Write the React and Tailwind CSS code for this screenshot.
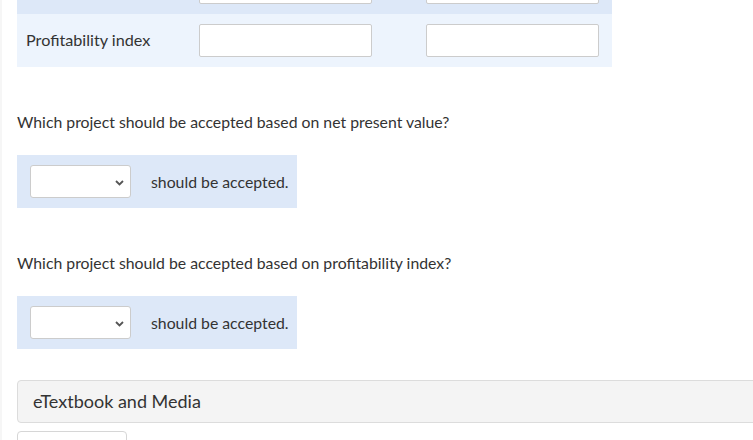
import React from "react";

const font = { fontFamily: "Lato, 'Open Sans', sans-serif" };

function Chevron() {
  return (
    <svg width="9" height="6" viewBox="0 0 9 6" className="absolute right-[6px] top-[14px]">
      <path d="M1 1 L4.5 4.5 L8 1" fill="none" stroke="#555" strokeWidth="1.8" />
    </svg>
  );
}

function SelectBox() {
  return (
    <div className="flex items-center w-[280px] h-[53px] bg-[#dde8f8] pl-[13px]">
      <div className="relative w-[101px] h-[33px] bg-white border border-[#cccccc] rounded-[3px]">
        <Chevron />
      </div>
      <span className="ml-[20px] text-[15.8px] text-[#333] leading-none">should be accepted.</span>
    </div>
  );
}

function Input() {
  return <div className="w-[173px] h-[33px] bg-white border border-[#cccccc] rounded-[2px]" />;
}

export default function App() {
  return (
    <div className="w-[753px] h-[440px] overflow-hidden bg-white border-l-[2px] border-[#f6f6f6]" style={font}>
      <div className="pl-[15px]">
        <div className="w-[595px] mt-[-39px]">
          <div className="flex items-center h-[53px] bg-[#dde8f8]">
            <div className="w-[182px]" />
            <Input />
            <div className="w-[54px]" />
            <Input />
          </div>
          <div className="flex items-center h-[53px] bg-[#edf4fd]">
            <div className="w-[182px] pl-[9px] text-[16.2px] text-[#333]">Profitability index</div>
            <Input />
            <div className="w-[54px]" />
            <Input />
          </div>
        </div>

        <p className="mt-[44px] text-[15.8px] leading-[22px] text-[#333]">
          Which project should be accepted based on net present value?
        </p>
        <div className="mt-[22px]">
          <SelectBox />
        </div>

        <p className="mt-[44px] text-[15.8px] leading-[22px] text-[#333]">
          Which project should be accepted based on profitability index?
        </p>
        <div className="mt-[22px]">
          <SelectBox />
        </div>

        <div className="mt-[31px] w-[760px] h-[43px] flex items-center bg-[#f4f4f4] border border-[#dcdcdc] rounded-[4px] pl-[15px]">
          <span className="text-[18px] text-[#333]">eTextbook and Media</span>
        </div>
        <div className="mt-[8px] w-[110px] h-[20px] border border-[#d6d6d6] rounded-t-[4px] bg-white" />
      </div>
    </div>
  );
}
